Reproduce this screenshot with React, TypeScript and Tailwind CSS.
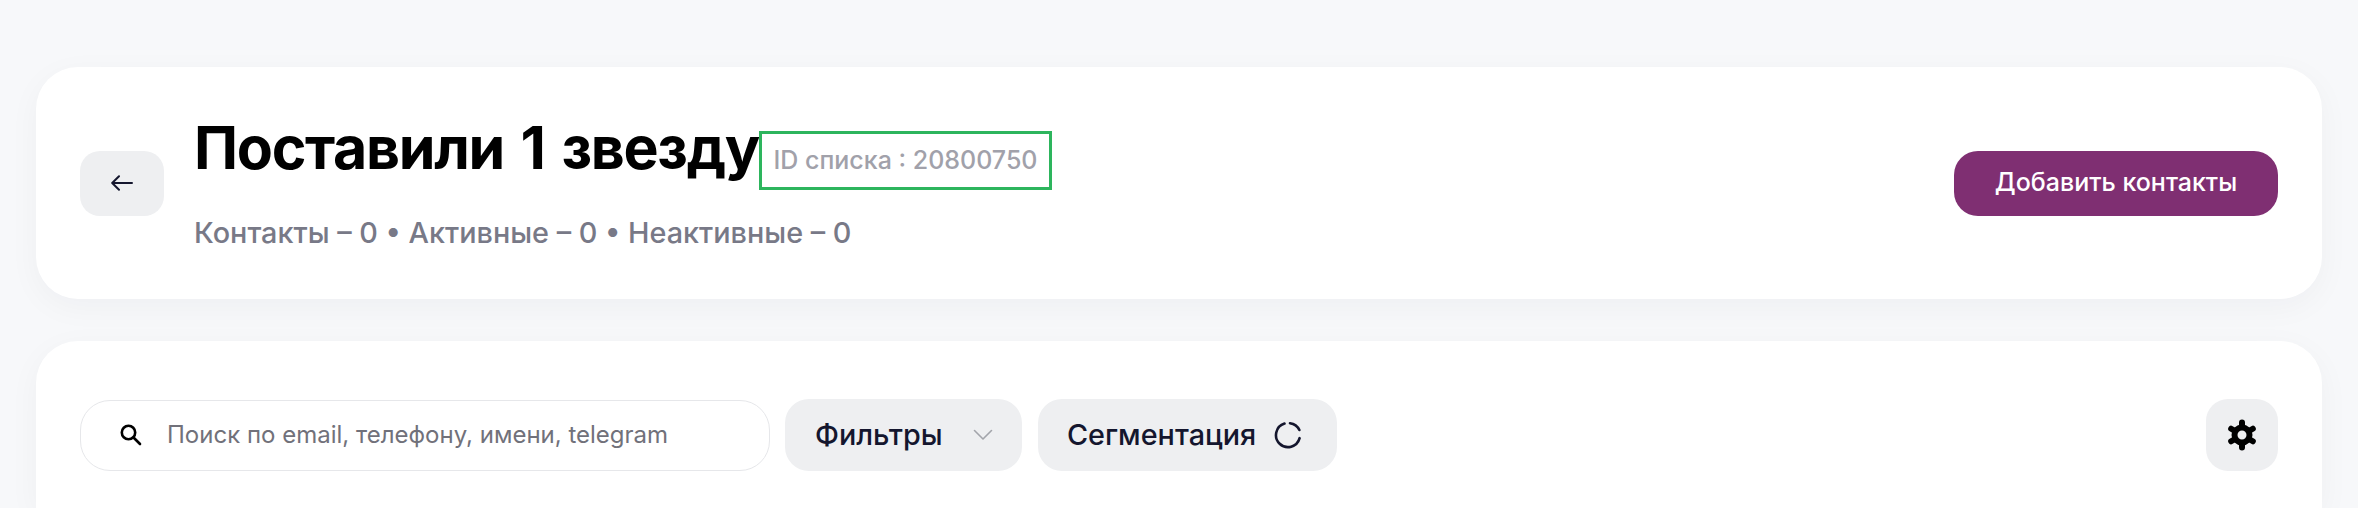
function BackIcon() {
  return (
    <svg width="22" height="16" viewBox="0 0 22 16" fill="none" className="text-[#14162e]">
      <path d="M21 8H1.5M8 1.2L1.2 8L8 14.8" stroke="currentColor" strokeWidth="2" strokeLinecap="round" strokeLinejoin="round" />
    </svg>
  )
}

function SearchIcon() {
  return (
    <svg width="22" height="22" viewBox="0 0 22 22" fill="none" className="shrink-0 text-black">
      <circle cx="8.5" cy="8.5" r="6.7" stroke="currentColor" strokeWidth="2.6" />
      <path d="M13.5 13.5L20 20" stroke="currentColor" strokeWidth="2.6" strokeLinecap="round" />
    </svg>
  )
}

function ChevronIcon() {
  return (
    <svg width="20" height="12" viewBox="0 0 20 12" fill="none" className="text-[#a3a5ab]">
      <path d="M1.5 1.5L10 10L18.5 1.5" stroke="currentColor" strokeWidth="1.6" strokeLinecap="round" strokeLinejoin="round" />
    </svg>
  )
}

function SegmentIcon() {
  return (
    <svg width="28" height="28" viewBox="0 0 28 28" fill="none" className="text-[#14162e]">
      <path d="M10.5 2.6A12 12 0 1 0 25.6 17.2" stroke="currentColor" strokeWidth="2.6" strokeLinecap="round" />
      <path d="M16 2.2A12 12 0 0 1 25.4 9" stroke="currentColor" strokeWidth="2.6" strokeLinecap="round" />
    </svg>
  )
}

function GearIcon() {
  return (
    <svg width="32" height="32" viewBox="0 0 32 32" fill="none" className="text-black">
      <circle cx="16" cy="16" r="7.5" stroke="currentColor" strokeWidth="6" />
      <path
        d="M16 3.5V6M16 28.5V26M26.83 9.75L24.66 11M26.83 22.25L24.66 21M5.17 9.75L7.34 11M5.17 22.25L7.34 21"
        stroke="currentColor"
        strokeWidth="6"
        strokeLinecap="round"
      />
    </svg>
  )
}

export default function App() {
  return (
    <div className="flex h-[508px] flex-col overflow-hidden bg-[#f7f8fa] px-[36px] pt-[67px] font-['Inter',sans-serif]">
      <section className="flex h-[232px] shrink-0 items-center rounded-[42px] bg-white px-[44px] shadow-[0_8px_32px_rgba(20,22,46,0.04)]">
        <button className="flex h-[65px] w-[84px] shrink-0 items-center justify-center rounded-[20px] bg-[#eeeff1]">
          <BackIcon />
        </button>

        <div className="ml-[30px]">
          <div className="flex items-start">
            <h1 className="text-[59px] leading-[70px] font-bold tracking-[-1.3px] [word-spacing:4px] whitespace-nowrap text-black">Поставили 1 звезду</h1>
            <div className="mt-[18px] flex h-[59px] w-[293px] items-center justify-center border-[3px] border-[#2db55d] text-[25px] font-medium whitespace-nowrap text-[#a1a1aa]">
              ID списка : 20800750
            </div>
          </div>
          <p className="mt-[23px] text-[28.8px] leading-[40px] font-medium whitespace-nowrap text-[#787987]">
            Контакты – 0 • Активные – 0 • Неактивные – 0
          </p>
        </div>

        <button className="ml-auto flex h-[65px] w-[324px] items-center justify-center rounded-[24px] bg-[#7f2f72] text-[25px] font-medium whitespace-nowrap text-white">
          Добавить контакты
        </button>
      </section>

      <section className="mt-[42px] flex-1 rounded-t-[42px] bg-white px-[44px] pt-[58px] shadow-[0_8px_32px_rgba(20,22,46,0.04)]">
        <div className="flex items-center">
          <div className="flex h-[71px] w-[690px] items-center rounded-[30px] border border-[#e6e7ea] bg-white pl-[39px]">
            <SearchIcon />
            <span className="ml-[25px] text-[24px] whitespace-nowrap text-[#71717a]">Поиск по email, телефону, имени, telegram</span>
          </div>

          <button className="ml-[15px] flex h-[72px] w-[237px] items-center rounded-[24px] bg-[#eeeff1] pl-[30px] text-[28.8px] font-medium text-[#14162e]">
            Фильтры
            <span className="ml-[30px] flex">
              <ChevronIcon />
            </span>
          </button>

          <button className="ml-[16px] flex h-[72px] w-[299px] items-center rounded-[24px] bg-[#eeeff1] pl-[29px] text-[28.8px] font-medium text-[#14162e]">
            Сегментация
            <span className="ml-[18px] flex">
              <SegmentIcon />
            </span>
          </button>

          <button className="ml-auto flex h-[72px] w-[72px] items-center justify-center rounded-[22px] bg-[#eeeff1]">
            <GearIcon />
          </button>
        </div>
      </section>
    </div>
  )
}
